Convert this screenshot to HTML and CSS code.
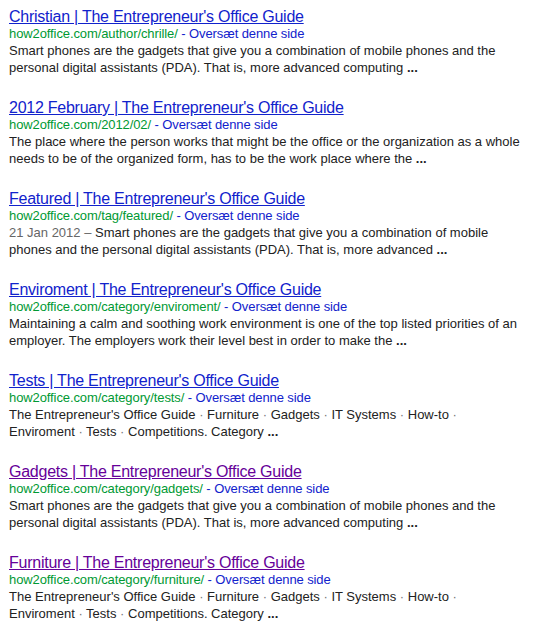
FILE: index.html
```html
<!DOCTYPE html>
<html lang="da">
<head>
    <meta charset="UTF-8">
    <title>how2office.com - søgeresultater</title>
    <link rel="stylesheet" href="styles.css">
</head>
<body>
    <ol class="results">
        <li class="result">
            <h3 class="r"><a href="#">Christian | The Entrepreneur's Office Guide</a></h3>
            <div class="meta"><cite>how2office.com/author/chrille/</cite> - <a class="tl" href="#">Oversæt denne side</a></div>
            <div class="st">Smart phones are the gadgets that give you a combination of mobile phones and the personal digital assistants (PDA). That is, more advanced computing <b>...</b></div>
        </li>
        <li class="result">
            <h3 class="r"><a href="#">2012 February | The Entrepreneur's Office Guide</a></h3>
            <div class="meta"><cite>how2office.com/2012/02/</cite> - <a class="tl" href="#">Oversæt denne side</a></div>
            <div class="st">The place where the person works that might be the office or the organization as a whole needs to be of the organized form, has to be the work place where the <b>...</b></div>
        </li>
        <li class="result">
            <h3 class="r"><a href="#">Featured | The Entrepreneur's Office Guide</a></h3>
            <div class="meta"><cite>how2office.com/tag/featured/</cite> - <a class="tl" href="#">Oversæt denne side</a></div>
            <div class="st"><span class="date">21 Jan 2012 – </span>Smart phones are the gadgets that give you a combination of mobile phones and the personal digital assistants (PDA). That is, more advanced <b>...</b></div>
        </li>
        <li class="result">
            <h3 class="r"><a href="#">Enviroment | The Entrepreneur's Office Guide</a></h3>
            <div class="meta"><cite>how2office.com/category/enviroment/</cite> - <a class="tl" href="#">Oversæt denne side</a></div>
            <div class="st">Maintaining a calm and soothing work environment is one of the top listed priorities of an employer. The employers work their level best in order to make the <b>...</b></div>
        </li>
        <li class="result">
            <h3 class="r"><a href="#">Tests | The Entrepreneur's Office Guide</a></h3>
            <div class="meta"><cite>how2office.com/category/tests/</cite> - <a class="tl" href="#">Oversæt denne side</a></div>
            <div class="st">The Entrepreneur's Office Guide <span class="sep">·</span> Furniture <span class="sep">·</span> Gadgets <span class="sep">·</span> IT Systems <span class="sep">·</span> How-to <span class="sep">·</span> Enviroment <span class="sep">·</span> Tests <span class="sep">·</span> Competitions. Category <b>...</b></div>
        </li>
        <li class="result">
            <h3 class="r"><a class="visited" href="#">Gadgets | The Entrepreneur's Office Guide</a></h3>
            <div class="meta"><cite>how2office.com/category/gadgets/</cite> - <a class="tl" href="#">Oversæt denne side</a></div>
            <div class="st">Smart phones are the gadgets that give you a combination of mobile phones and the personal digital assistants (PDA). That is, more advanced computing <b>...</b></div>
        </li>
        <li class="result">
            <h3 class="r"><a class="visited" href="#">Furniture | The Entrepreneur's Office Guide</a></h3>
            <div class="meta"><cite>how2office.com/category/furniture/</cite> - <a class="tl" href="#">Oversæt denne side</a></div>
            <div class="st">The Entrepreneur's Office Guide <span class="sep">·</span> Furniture <span class="sep">·</span> Gadgets <span class="sep">·</span> IT Systems <span class="sep">·</span> How-to <span class="sep">·</span> Enviroment <span class="sep">·</span> Tests <span class="sep">·</span> Competitions. Category <b>...</b></div>
        </li>
    </ol>
</body>
</html>
```

FILE: styles.css
```css
/* søgeresultater */
:root {
    --link: #1122cc;
    --visited: #660099;
    --green: #009933;
    --text: #222222;
    --font: "Liberation Sans", Arial, sans-serif;
}

body {
    margin: 0;
    background: #ffffff;
    font-family: var(--font);
    color: var(--text);
}

.results {
    list-style: none;
    margin: 0;
    padding: 7px 0 0 9px;
    width: 515px;
    display: flex;
    flex-direction: column;
    gap: 22px;
}

.result {
    margin: 0;
}

.r {
    margin: 0;
    font-size: 16px;
    font-weight: normal;
    line-height: 19px;
    letter-spacing: -0.25px;
    white-space: nowrap;
}

.r a {
    color: var(--link);
    text-decoration: underline;
}

.r a.visited {
    color: var(--visited);
}

.meta {
    font-size: 13px;
    line-height: 16px;
    letter-spacing: -0.1px;
    color: var(--link);
    white-space: nowrap;
}

.meta cite {
    font-style: normal;
    color: var(--green);
}

.tl {
    color: var(--link);
    text-decoration: none;
}

.st {
    font-size: 13px;
    line-height: 17px;
    color: var(--text);
}

.st .date {
    color: #666666;
}

.st .sep {
    color: #777777;
}
```
